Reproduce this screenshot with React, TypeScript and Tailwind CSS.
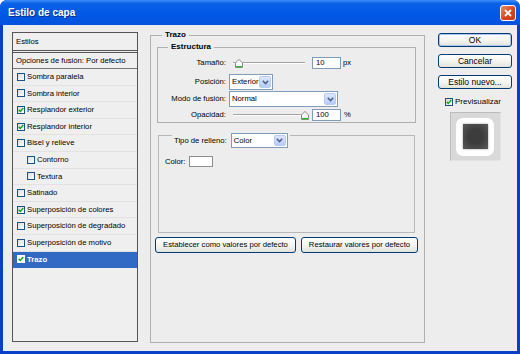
import React from 'react';

// ---- small XP-style widgets ----

const Check = ({ checked, selected }: { checked?: boolean; selected?: boolean }) => (
  <span
    className={`flex h-[8px] w-[8px] shrink-0 items-center justify-center border ${
      selected ? 'border-white bg-white' : 'border-[#1c5180] bg-[linear-gradient(135deg,#dcdcd4,#ffffff)]'
    }`}
  >
    {checked && (
      <svg width="6" height="6" viewBox="0 0 6 6">
        <path d="M0.7 2.9 L2.3 4.5 L5.3 1.1" fill="none" stroke="#21a121" strokeWidth="1.5" />
      </svg>
    )}
  </span>
);

const Chevron = () => (
  <svg width="7" height="5" viewBox="0 0 7 5">
    <path d="M0.8 0.8 L3.5 3.6 L6.2 0.8" fill="none" stroke="#4d6185" strokeWidth="1.5" />
  </svg>
);

const Combo = ({ value, className }: { value: string; className: string }) => (
  <div className={`flex items-center border border-[#7f9db9] bg-white ${className}`}>
    <span className="min-w-0 flex-1 whitespace-nowrap pl-[2px] leading-none">{value}</span>
    <span className="m-px flex h-[calc(100%-2px)] w-[12px] shrink-0 items-center justify-center rounded-[2px] border border-[#b9cbf3] bg-[linear-gradient(#dde7fe,#b6cbfb)]">
      <Chevron />
    </span>
  </div>
);

const Thumb = ({ className }: { className: string }) => (
  <svg className={`absolute top-[3px] ${className}`} width="8" height="9" viewBox="0 0 8 9">
    <path d="M0.5 8.5 V3.8 L4 0.5 L7.5 3.8 V8.5 Z" fill="#fbfbfb" stroke="#8c8c8c" />
    <path d="M1 7.6 H7" stroke="#2fb52f" strokeWidth="1.4" />
  </svg>
);

const Slider = ({ thumb }: { thumb: string }) => (
  <div className="relative ml-[7px] h-[14px] w-[72px]">
    <div className="mt-[6px] h-[2px] border-t border-b border-t-[#a3a3a3] border-b-white" />
    <Thumb className={thumb} />
  </div>
);

const XpButton = ({ label, className }: { label: string; className: string }) => (
  <div
    className={`flex items-center justify-center rounded-[3px] border border-[#003c74] bg-[linear-gradient(#ffffff,#f2f2ee_60%,#e3e3dc)] ${className}`}
  >
    {label}
  </div>
);

// ---- data ----

interface StyleItem {
  label: string;
  checked?: boolean;
  indent?: boolean;
  selected?: boolean;
}

const styleItems: StyleItem[] = [
  { label: 'Sombra paralela' },
  { label: 'Sombra interior' },
  { label: 'Resplandor exterior', checked: true },
  { label: 'Resplandor interior', checked: true },
  { label: 'Bisel y relieve' },
  { label: 'Contorno', indent: true },
  { label: 'Textura', indent: true },
  { label: 'Satinado' },
  { label: 'Superposición de colores', checked: true },
  { label: 'Superposición de degradado' },
  { label: 'Superposición de motivo' },
  { label: 'Trazo', checked: true, selected: true },
];

export default function App() {
  return (
    <div className="flex h-[354px] w-[520px] flex-col overflow-hidden rounded-t-[7px] bg-[#0a3fc8] font-['Liberation_Sans',Arial,sans-serif] text-[7.7px] text-black">
      {/* Title bar */}
      <div className="flex h-[25px] shrink-0 items-center bg-[linear-gradient(to_bottom,#3d8ff8_0%,#0a62e6_14%,#0058e6_55%,#0552dc_100%)] pl-[8px] pr-[4px]">
        <span className="flex-1 text-[10px] font-bold text-white [text-shadow:1px_1px_0_#0a2a8a]">Estilo de capa</span>
        <div className="flex h-[16px] w-[16px] items-center justify-center rounded-[3px] border border-white bg-[linear-gradient(135deg,#ee8a6a,#d9431e_55%,#c43a14)]">
          <svg width="8" height="8" viewBox="0 0 8 8">
            <path d="M1 1 L7 7 M7 1 L1 7" stroke="white" strokeWidth="1.8" />
          </svg>
        </div>
      </div>

      {/* Body */}
      <div className="mx-[3px] mb-[3px] flex flex-1 items-start bg-[#ededed]">
        {/* Styles list */}
        <div className="ml-[9px] mt-[7px] flex h-[310px] w-[126px] flex-col border border-[#555555] bg-[#efefef]">
          <div className="flex h-[20px] items-center border-b-[3px] border-double border-[#555555] pl-[3px]">Estilos</div>
          <div className="flex h-[16px] items-center border-b border-[#777777] pl-[3px]">Opciones de fusión: Por defecto</div>
          {styleItems.map((item) => (
            <div
              key={item.label}
              className={`flex h-[16.6px] items-center gap-[2px] border-b ${item.indent ? 'pl-[14px]' : 'pl-[4px]'} ${
                item.selected ? 'border-[#316ac5] bg-[#316ac5] font-bold text-white' : 'border-[#e2e2e2]'
              }`}
            >
              <Check checked={item.checked} selected={item.selected} />
              <span>{item.label}</span>
            </div>
          ))}
        </div>

        {/* Trazo group */}
        <fieldset className="ml-[12px] mt-[5px] h-[313px] w-[273px] border border-[#b0b0b0] p-0">
          <legend className="ml-[11px] px-[3px] text-[8px] font-bold leading-[10px]">Trazo</legend>
          <div className="px-[6px] pt-[2px]">
            <fieldset className="w-[259px] border border-[#b0b0b0] p-0">
              <legend className="ml-[10px] px-[3px] text-[8px] font-bold leading-[10px]">Estructura</legend>
              <div className="flex flex-col pt-[4px]">
                <div className="flex h-[14px] items-center">
                  <span className="w-[68px] text-right">Tamaño:</span>
                  <Slider thumb="left-[2px]" />
                  <div className="ml-[7px] flex h-[12px] w-[29px] items-center border border-[#7f9db9] bg-white pl-[3px]">10</div>
                  <span className="ml-[2px]">px</span>
                </div>
                <div className="mt-[4px] flex h-[16px] items-center">
                  <span className="w-[68px] text-right">Posición:</span>
                  <Combo value="Exterior" className="ml-[3px] h-[16px] w-[44px]" />
                </div>
                <div className="mt-[1px] flex h-[16px] items-center">
                  <span className="w-[68px] text-right">Modo de fusión:</span>
                  <Combo value="Normal" className="ml-[3px] h-[16px] w-[109px]" />
                </div>
                <div className="mt-[1px] flex h-[14px] items-center">
                  <span className="w-[68px] text-right">Opacidad:</span>
                  <Slider thumb="left-[68px]" />
                  <div className="ml-[7px] flex h-[12px] w-[29px] items-center border border-[#7f9db9] bg-white pl-[3px]">100</div>
                  <span className="ml-[3px]">%</span>
                </div>
              </div>
            </fieldset>

            {/* Fill type group */}
            <div className="ml-[1px] mt-[12px] h-[98px] w-[257px] border border-[#b8b8b8]">
              <div className="-mt-[3px] ml-[13px] flex w-fit items-center gap-[4px] bg-[#ededed] px-[2px]">
                <span>Tipo de relleno:</span>
                <Combo value="Color" className="h-[15px] w-[57px]" />
              </div>
              <div className="mt-[8px] flex h-[11px] items-center gap-[3px] pl-[6px]">
                <span>Color:</span>
                <div className="h-[11px] w-[24px] border border-[#8d8d8d] bg-white" />
              </div>
            </div>

            <div className="-ml-[2px] mt-[4px] flex gap-[5px]">
              <XpButton label="Establecer como valores por defecto" className="h-[16px] w-[141px]" />
              <XpButton label="Restaurar valores por defecto" className="h-[16px] w-[117px]" />
            </div>
          </div>
        </fieldset>

        {/* Right column */}
        <div className="ml-[13px] mt-[8px] flex w-[74px] flex-col text-[8.5px]">
          <XpButton label="OK" className="h-[14px] shadow-[inset_0_0_0_1px_#a8c4f0]" />
          <XpButton label="Cancelar" className="mt-[7px] h-[14px]" />
          <XpButton label="Estilo nuevo..." className="mt-[7px] h-[14px]" />
          <div className="mt-[8px] flex h-[9px] items-center gap-[2px] pl-[7px] text-[8px]">
            <Check checked />
            <span>Previsualizar</span>
          </div>
          <div className="mx-auto mt-[6px] flex h-[49px] w-[51px] items-center justify-center border border-t-[#bcbcbc] border-l-[#bcbcbc] border-r-[#e4e4e4] border-b-[#e4e4e4] bg-[#d9d9d9]">
            <div className="flex h-[38px] w-[38px] items-center justify-center rounded-[7px] bg-white">
              <div className="h-[25px] w-[25px] bg-[radial-gradient(circle,#3c3c3c_40%,#5a5a5a_100%)] shadow-[0_0_2px_#9a9a9a]" />
            </div>
          </div>
        </div>
      </div>
    </div>
  );
}
